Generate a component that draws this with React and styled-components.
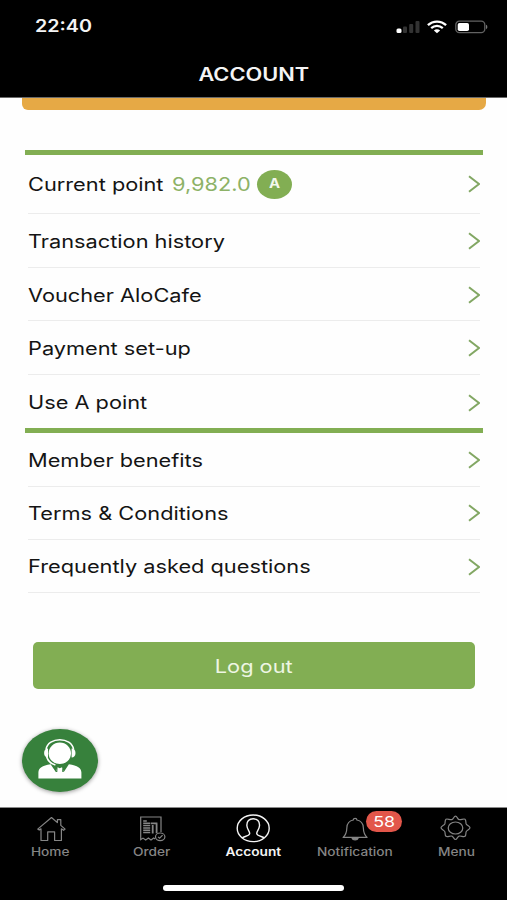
import React from "react";
import styled, { createGlobalStyle } from "styled-components";

const GlobalStyle = createGlobalStyle`
  * { box-sizing: border-box; }
  body { margin: 0; background: #fefefe; }
`;

const green = "#82ae53";

const Screen = styled.div`
  width: 507px;
  height: 900px;
  display: flex;
  flex-direction: column;
  overflow: hidden;
  background: #fefefe;
  color: #141414;
  font-family: Inter, "Liberation Sans", sans-serif;
`;

const Header = styled.header`
  height: 98px;
  flex: none;
  background: #000;
  border-bottom: 1px solid #6a6a6a;
  color: #f4f4f4;
`;

const StatusBar = styled.div`
  height: 53px;
  padding: 0 19px 0 35px;
  display: flex;
  align-items: center;
  justify-content: space-between;
`;

/* Wide lettering: glyphs are stretched sideways by the given factor. */
const Wide = styled.span`
  display: inline-block;
  white-space: nowrap;
  line-height: 1;
  font-size: ${(p) => p.$size}px;
  font-weight: ${(p) => p.$weight || 400};
  color: ${(p) => p.$color || "inherit"};
  transform: scaleX(${(p) => p.$stretch || 1.19});
  transform-origin: ${(p) => p.$origin || "left"} center;
`;

const StatusIcons = styled.div`
  display: flex;
  align-items: center;
  gap: 7px;
  svg { display: block; }
`;

const Title = styled.div`
  height: 44px;
  display: flex;
  align-items: center;
  justify-content: center;
`;

const Content = styled.main`
  flex: 1;
  display: flex;
  flex-direction: column;
  min-height: 0;
`;

const Banner = styled.div`
  height: 12px;
  flex: none;
  margin: 0 21px 0 22px;
  background: #e6a945;
  border-radius: 0 0 7px 6px;
`;

const Section = styled.section`
  margin: ${(p) => p.$top || 0}px 24px 0 25px;
  border-top: 5px solid ${green};
  padding: 0 3px;
`;

const Row = styled.div`
  height: ${(p) => p.$height}px;
  padding-top: ${(p) => p.$drop || 0}px;
  display: flex;
  align-items: center;
  justify-content: space-between;
  border-bottom: ${(p) => (p.$last ? "0" : "1px")} solid #ececec;
`;

const PointLabel = styled.div`
  display: grid;
  grid-template-columns: 143.5px 85.5px 35px;
  align-items: center;
`;

const Coin = styled.span`
  width: 35px;
  height: 29px;
  border-radius: 50%;
  background: ${green};
  display: flex;
  align-items: center;
  justify-content: center;
`;

const ChevronIcon = styled.svg`
  width: 14px;
  height: 18px;
  display: block;
`;

const LogoutButton = styled.button`
  height: 47px;
  flex: none;
  margin: 49px 32px 0 33px;
  padding: 0;
  border: 0;
  border-radius: 5px;
  background: ${green};
  font-family: inherit;
  display: flex;
  align-items: center;
  justify-content: center;
`;

const SupportButton = styled.button`
  width: 76px;
  height: 63px;
  margin: 40px 0 0 22px;
  padding: 0;
  border: 0;
  border-radius: 50%;
  background: #37813c;
  box-shadow: 0 1px 4px rgba(0, 0, 0, 0.4);
  svg { display: block; }
`;

const TabBar = styled.nav`
  height: 93px;
  flex: none;
  background: #000;
  border-top: 1px solid #8a8a8a;
  display: flex;
  flex-direction: column;
  align-items: center;
`;

const Tabs = styled.div`
  width: 100%;
  height: 77px;
  display: grid;
  grid-template-columns: repeat(5, 1fr);
`;

const Tab = styled.div`
  position: relative;
  color: ${(p) => (p.$active ? "#f4f4f4" : "#858585")};
  display: flex;
  flex-direction: column;
  align-items: center;
  padding-top: 6px;
  svg { display: block; }
`;

const TabIcon = styled.div`
  height: 33px;
`;

const Badge = styled.span`
  position: absolute;
  left: 62px;
  top: 3px;
  width: 36px;
  height: 21px;
  border-radius: 11px;
  background: #e2564a;
  display: flex;
  align-items: center;
  justify-content: center;
`;

const HomeIndicator = styled.div`
  width: 181px;
  height: 6px;
  border-radius: 3px;
  background: #fff;
`;

const Chevron = () => (
  <ChevronIcon viewBox="0 0 14 18" fill="none" stroke="#82a763" strokeWidth="2">
    <path d="M3 1.200 13 9 3 16.800" />
  </ChevronIcon>
);

const Signal = () => (
  <svg width="24" height="14" viewBox="0 0 24 14">
    <rect x="0.5" y="8.5" width="5" height="4.5" rx="1.5" fill="#fff" />
    <rect x="7" y="6.5" width="4" height="6.5" rx="1" fill="#333" />
    <rect x="13.200" y="4" width="4" height="9" rx="1" fill="#333" />
    <rect x="19.5" y="1" width="4" height="12" rx="1" fill="#333" />
  </svg>
);

const Wifi = () => (
  <svg width="20" height="14" viewBox="0 0 20 14" fill="none" stroke="#fff" strokeWidth="2.3">
    <path d="M0.9 5.2C6 .3 14 .3 19.1 5.2" />
    <path d="M4.2 8.1c3.4-3 8.2-3 11.6 0" />
    <path d="M6.9 10.4c1.9-1.6 4.3-1.6 6.2 0L10 13.3z" fill="#fff" stroke="none" />
  </svg>
);

const Battery = () => (
  <svg width="34" height="14" viewBox="0 0 34 14">
    <rect x="1.800" y="1.2" width="29" height="11.4" rx="3.6" fill="none" stroke="#626262" strokeWidth="1.3" />
    <rect x="3.700" y="3" width="11.3" height="8" rx="1.8" fill="#fff" />
    <path d="M32 4.800c1.800.5 1.800 3.800 0 4.400z" fill="#777" />
  </svg>
);

const Agent = () => (
  <svg width="76" height="63" viewBox="0 0 76 63">
    <ellipse cx="37.8" cy="24.300" rx="11.200" ry="10.800" fill="#fff" />
    <path d="M24 20.500C26 7.500 49.600 7.500 51.600 20.500" fill="none" stroke="#fff" strokeWidth="1.600" />
    <path d="M26 19.500c-2.400 0-3.900 1.700-3.900 4.500s1.500 4.600 3.900 4.600zM49.600 19.500c2.400 0 3.900 1.700 3.900 4.500s-1.500 4.600-3.900 4.600z" fill="#fff" />
    <path d="M24.700 28c1.300 4 4.600 7 8.700 8" fill="none" stroke="#fff" strokeWidth="1.800" />
    <path d="M16.400 49.400V43.500c0-4.500 3.800-6.900 12.200-8.300L33.800 43 35.600 38.200l2.200 1 2.200-1L41.800 43 46.900 35.200C55.600 36.600 59.400 39 59.400 43.500v5.900z" fill="#fff" />
    <path d="m35.600 38.200-1.800 4.800h1.500zM40 38.200l1.800 4.800h-1.500z" fill="#37813c" />
  </svg>
);

const Home = () => (
  <svg width="32" height="30" viewBox="0 0 32 30" fill="none" stroke="currentColor" strokeWidth="1.2" strokeLinejoin="round">
    <path d="M16.500 3.500 2.700 15.100l1.500 1L6 14.800V26.500h6.700v-8.700h6.900v8.700h6.800V14.800l2.200 1.500 1.500-1.200-4.300-3.700V5.700h-3.400v2.900z" />
  </svg>
);

const Order = () => (
  <svg width="32" height="30" viewBox="0 0 32 30" fill="none" stroke="currentColor" strokeWidth="1.2">
    <path d="M25 18V3H4.700v22.600l2.300-1.500 2.700 1.900 2.700-1.900 2.600 1.900 2.700-1.900 1.500 1" />
    <path d="M7.200 7h3.600M7.200 9.300h7M7.200 11.600h7M7.200 13.900h7M7.200 16.200h7M7.200 18.500h7" strokeWidth="1.500" />
    <path d="M14.800 9.300h6.600M16.700 11v8.500M20.600 9.300v10" strokeWidth="1.800" />
    <ellipse cx="24.200" cy="22.800" rx="4.700" ry="3.800" />
    <path d="m22 22.900 1.600 1.300 3-3" />
  </svg>
);

const Account = () => (
  <svg width="34" height="30" viewBox="0 0 34 30" fill="none" stroke="currentColor" strokeWidth="1.400">
    <ellipse cx="17.200" cy="14.300" rx="16" ry="13.300" />
    <path d="M6.200 23.800c2-1.500 7.300-1.600 7.500-4.300.1-2.200-2.500-3.800-2.800-7.800-.3-4.500 2.300-6.900 6.300-6.900s6.600 2.400 6.300 6.900c-.3 4-2.900 5.600-2.800 7.800.2 2.700 5.500 2.800 7.500 4.300" />
  </svg>
);

const Bell = () => (
  <svg width="32" height="30" viewBox="0 0 32 30" fill="none" stroke="currentColor" strokeWidth="1.200" strokeLinejoin="round">
    <path d="M14.300 6c0-2.300 3.600-2.300 3.600 0 4.200.8 6.200 3.500 6.400 7.500.2 5.300.8 7.400 3.800 9.900H4.100c3-2.500 3.600-4.600 3.800-9.900.2-4 2.200-6.700 6.400-7.500z" />
    <path d="M13 24.100h6.200c-.8 2.500-5.400 2.500-6.200 0z" fill="currentColor" />
  </svg>
);

const Gear = () => (
  <svg width="32" height="30" viewBox="0 0 32 30" fill="none" stroke="currentColor" strokeWidth="1.200" strokeLinejoin="round">
    <path d="M15.500 2.200c1.700 0 1.900 2.900 3.600 3.400 1.800.5 4.700-1.300 5.900-.4s.7 3.200 1.100 4.600 3.900 2.300 3.900 4-3.500 2.500-3.900 4 .1 3.500-1.100 4.500-4.100-.7-5.900-.2-1.900 3.400-3.600 3.400-1.900-2.900-3.600-3.400-4.700 1.200-5.900.2-.7-3-1.100-4.500-3.900-2.300-3.900-4 3.500-2.500 3.900-4-.1-3.700 1.100-4.600 4.100.9 5.900.4 1.900-3.400 3.600-3.400z" />
    <ellipse cx="15.500" cy="14" rx="7.300" ry="6" />
  </svg>
);

const tabs = [
  { label: "Home", Icon: Home },
  { label: "Order", Icon: Order },
  { label: "Account", Icon: Account, active: true },
  { label: "Notification", Icon: Bell, badge: "58" },
  { label: "Menu", Icon: Gear },
];

const firstLinks = ["Transaction history", "Voucher AloCafe", "Payment set-up", "Use A point"];
const secondLinks = ["Member benefits", "Terms & Conditions", "Frequently asked questions"];

const LinkRow = ({ label, height, drop, last }) => (
  <Row $height={height} $drop={drop} $last={last}>
    <Wide $size={18.3}>{label}</Wide>
    <Chevron />
  </Row>
);

export default function App() {
  return (
    <Screen>
      <GlobalStyle />
      <Header>
        <StatusBar>
          <Wide $size={17} $weight={600} $stretch={1.16}>22:40</Wide>
          <StatusIcons>
            <Signal />
            <Wifi />
            <Battery />
          </StatusIcons>
        </StatusBar>
        <Title>
          <Wide $size={18} $weight={600} $stretch={1.21} $origin="center">ACCOUNT</Wide>
        </Title>
      </Header>
      <Content>
        <Banner />
        <Section $top={39.5}>
          <Row $height={59.5} $drop={1}>
            <PointLabel>
              <Wide $size={18.3}>Current point</Wide>
              <Wide $size={18.3} $color="#8db267">9,982.0</Wide>
              <Coin>
                <Wide $size={12.5} $weight={700} $color="#f3f8ec" $origin="center">A</Wide>
              </Coin>
            </PointLabel>
            <Chevron />
          </Row>
          {firstLinks.map((label, i) => (
            <LinkRow key={label} label={label} height={53.6} drop={2} last={i === firstLinks.length - 1} />
          ))}
        </Section>
        <Section>
          {secondLinks.map((label) => (
            <LinkRow key={label} label={label} height={53.3} drop={1} />
          ))}
        </Section>
        <LogoutButton>
          <Wide $size={18.3} $color="#eef6e4" $origin="center">Log out</Wide>
        </LogoutButton>
        <SupportButton aria-label="Support">
          <Agent />
        </SupportButton>
      </Content>
      <TabBar>
        <Tabs>
          {tabs.map(({ label, Icon, active, badge }) => (
            <Tab key={label} $active={active}>
              <TabIcon>
                <Icon />
              </TabIcon>
              <Wide $size={11.5} $weight={active ? 600 : 500} $origin="center">{label}</Wide>
              {badge && (
                <Badge>
                  <Wide $size={15} $color="#fff" $origin="center">{badge}</Wide>
                </Badge>
              )}
            </Tab>
          ))}
        </Tabs>
        <HomeIndicator />
      </TabBar>
    </Screen>
  );
}
